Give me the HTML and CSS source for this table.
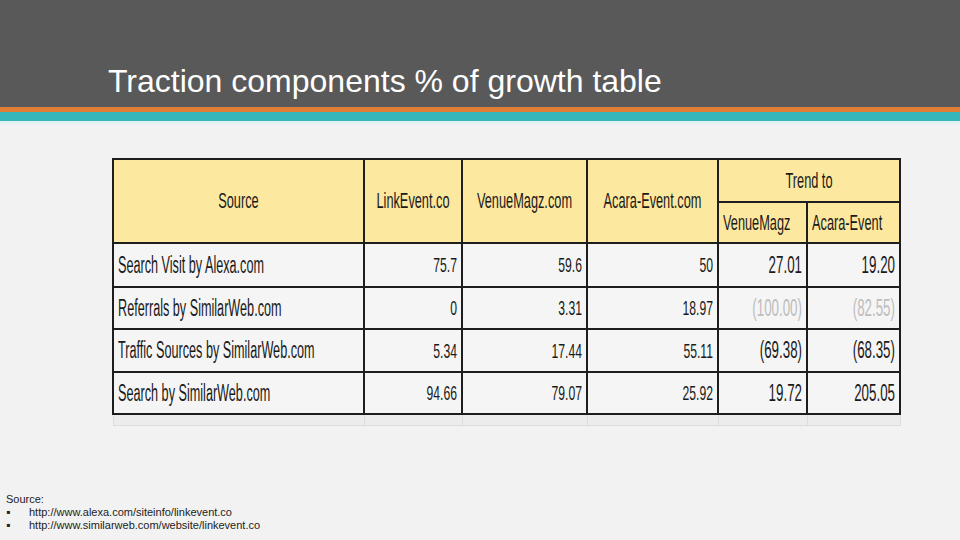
FILE: index.html
```html
<!DOCTYPE html>
<html lang="en">
<head>
<meta charset="utf-8">
<title>Traction components % of growth table</title>
<link rel="stylesheet" href="styles.css">
</head>
<body>
<header class="top">
  <h1 class="title">Traction components % of growth table</h1>
</header>
<div class="stripe orange"></div>
<div class="stripe teal"></div>
<div class="stripe pale"></div>
<main class="content">
  <table class="growth">
    <colgroup>
      <col class="c-src"><col class="c-link"><col class="c-venue"><col class="c-acara"><col class="c-t1"><col class="c-t2">
    </colgroup>
    <thead>
      <tr class="h1">
        <th rowspan="2" class="hc"><span class="sq">Source</span></th>
        <th rowspan="2" class="hc"><span class="sq">LinkEvent.co</span></th>
        <th rowspan="2" class="hc"><span class="sq">VenueMagz.com</span></th>
        <th rowspan="2" class="hc"><span class="sq">Acara-Event.com</span></th>
        <th colspan="2" class="hc"><span class="sq">Trend to</span></th>
      </tr>
      <tr class="h2">
        <th class="hl"><span class="sq">VenueMagz</span></th>
        <th class="hl"><span class="sq">Acara-Event</span></th>
      </tr>
    </thead>
    <tbody>
      <tr class="r1">
        <td class="lab"><span class="sq">Search Visit by Alexa.com</span></td>
        <td class="num"><span class="sq">75.7</span></td>
        <td class="num"><span class="sq">59.6</span></td>
        <td class="num"><span class="sq">50</span></td>
        <td class="tr"><span class="sq">27.01</span></td>
        <td class="tr"><span class="sq">19.20</span></td>
      </tr>
      <tr class="r2">
        <td class="lab"><span class="sq">Referrals by SimilarWeb.com</span></td>
        <td class="num"><span class="sq">0</span></td>
        <td class="num"><span class="sq">3.31</span></td>
        <td class="num"><span class="sq">18.97</span></td>
        <td class="tr faded"><span class="sq">(100.00)</span></td>
        <td class="tr faded"><span class="sq">(82.55)</span></td>
      </tr>
      <tr class="r3">
        <td class="lab"><span class="sq">Traffic Sources by SimilarWeb.com</span></td>
        <td class="num"><span class="sq">5.34</span></td>
        <td class="num"><span class="sq">17.44</span></td>
        <td class="num"><span class="sq">55.11</span></td>
        <td class="tr"><span class="sq">(69.38)</span></td>
        <td class="tr"><span class="sq">(68.35)</span></td>
      </tr>
      <tr class="r4">
        <td class="lab"><span class="sq">Search by SimilarWeb.com</span></td>
        <td class="num"><span class="sq">94.66</span></td>
        <td class="num"><span class="sq">79.07</span></td>
        <td class="num"><span class="sq">25.92</span></td>
        <td class="tr"><span class="sq">19.72</span></td>
        <td class="tr"><span class="sq">205.05</span></td>
      </tr>
      <tr class="ghost">
        <td></td><td></td><td></td><td></td><td></td><td></td>
      </tr>
    </tbody>
  </table>
</main>
<footer class="sources">
  <div class="src-title">Source:</div>
  <ul class="src-list">
    <li><span class="bullet">▪</span>http://www.alexa.com/siteinfo/linkevent.co</li>
    <li><span class="bullet">▪</span>http://www.similarweb.com/website/linkevent.co</li>
  </ul>
</footer>
</body>
</html>
```
FILE: styles.css
```css
html, body {
  margin: 0;
  padding: 0;
}
body {
  width: 960px;
  height: 540px;
  background: #f2f2f2;
  display: flex;
  flex-direction: column;
  overflow: hidden;
  font-family: "Liberation Sans", Arial, sans-serif;
  color: #1a1a1a;
}
.top {
  height: 107px;
  flex: none;
  background: #595959;
  display: flex;
  align-items: flex-end;
  padding-left: 108px;
  box-sizing: border-box;
}
.title {
  margin: 0 0 8px;
  font-weight: normal;
  font-size: 32px;
  line-height: 36px;
  color: #ffffff;
}
.stripe { flex: none; }
.orange { height: 5px; background: #e07c34; }
.teal { height: 9px; background: #35b6bb; }
.pale { height: 3px; background: #e3f1f2; }

.content {
  flex: none;
  padding: 34px 0 0 112px;
}
.growth {
  border-collapse: collapse;
  table-layout: fixed;
  width: 787px;
}
.c-src { width: 251px; }
.c-link { width: 98px; }
.c-venue { width: 125px; }
.c-acara { width: 131px; }
.c-t1 { width: 89px; }
.c-t2 { width: 93px; }

.growth th,
.growth td {
  border: 2px solid #1e1e1e;
  padding: 0 4px;
  white-space: nowrap;
  overflow: visible;
  font-weight: normal;
  vertical-align: middle;
}
.growth .sq {
  display: block;
  width: 172.4%;
  transform: scaleX(0.58);
  transform-origin: left center;
}
.growth th {
  background: #fde89f;
  font-size: 22px;
  line-height: 26px;
}
.hc { text-align: center; }
.hl { text-align: left; padding: 0 2px; vertical-align: bottom; }
.h1 { height: 43px; }
.h2 { height: 41px; }
.growth td { background: #f5f5f5; }
.lab { font-size: 23px; text-align: left; padding: 0 0 0 1px; }
.growth .lab .sq {
  width: 181.8%;
  transform: scaleX(0.55);
}
.num { font-size: 21px; text-align: right; padding: 0 3px; }
.tr { font-size: 23px; text-align: right; padding: 0 6px; }
.faded { color: #bdbdbd; }
.r1 { height: 44px; }
.r2 { height: 42px; }
.r3 { height: 43px; }
.r4 { height: 42px; }
.growth .ghost { height: 11px; }
.growth .ghost td {
  border: 1px solid #dcdcdc;
  background: #ececec;
  padding: 0;
}

.sources {
  margin-top: auto;
  padding: 0 0 8px 6px;
  font-size: 11px;
  line-height: 13px;
  color: #222;
}
.src-list {
  list-style: none;
  margin: 0;
  padding: 0;
}
.bullet {
  display: inline-block;
  width: 23px;
  font-size: 12px;
}
```
